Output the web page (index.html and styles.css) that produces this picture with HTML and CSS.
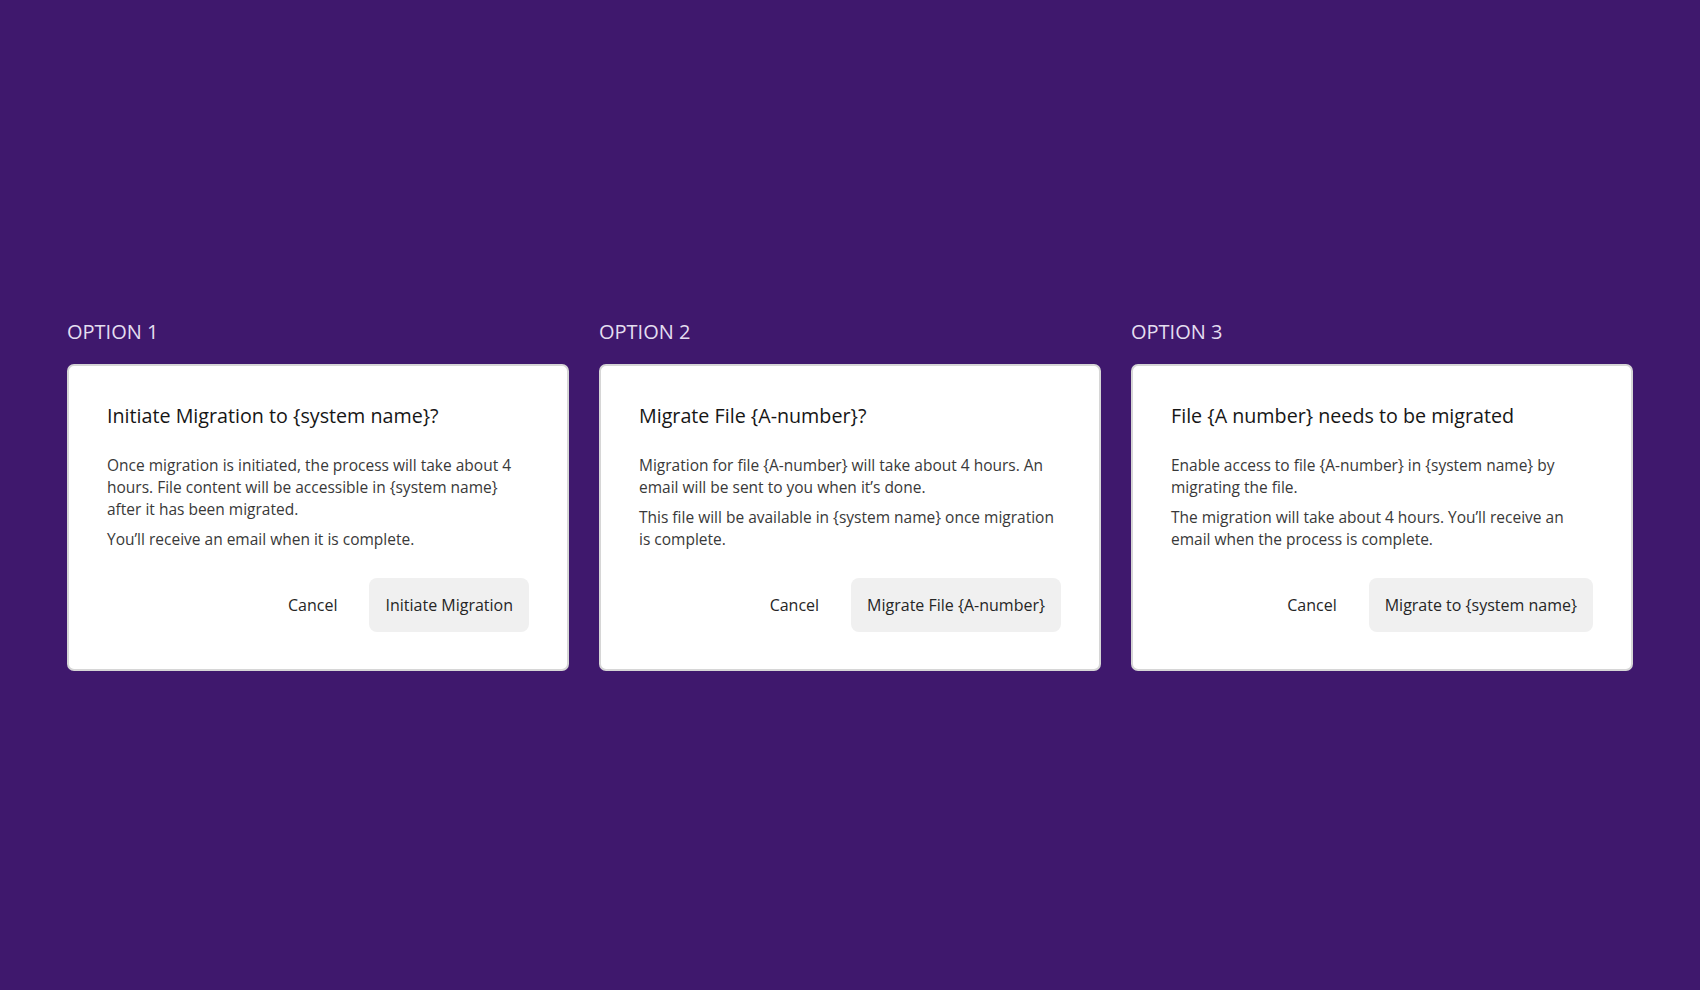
FILE: index.html
```html
<!DOCTYPE html>
<html lang="en">
<head>
<meta charset="UTF-8" />
<meta name="viewport" content="width=device-width, initial-scale=1" />
<title>Migration Dialog Options</title>
<link rel="stylesheet" href="styles.css">
</head>
<body>
  <div class="options">
    <div class="option">
      <div class="option-label">OPTION 1</div>
      <div class="dialog">
        <h2 class="dialog-title">Initiate Migration to {system name}?</h2>
        <div class="dialog-body">
          <p>Once migration is initiated, the process will take about 4 hours. File content will be accessible in {system name} after it has been migrated.</p>
          <p>You’ll receive an email when it is complete.</p>
        </div>
        <div class="dialog-actions">
          <button class="btn btn-ghost">Cancel</button>
          <button class="btn btn-secondary">Initiate Migration</button>
        </div>
      </div>
    </div>

    <div class="option">
      <div class="option-label">OPTION 2</div>
      <div class="dialog">
        <h2 class="dialog-title">Migrate File {A-number}?</h2>
        <div class="dialog-body">
          <p>Migration for file {A-number} will take about 4 hours. An email will be sent to you when it’s done.</p>
          <p>This file will be available in {system name} once migration is complete.</p>
        </div>
        <div class="dialog-actions">
          <button class="btn btn-ghost">Cancel</button>
          <button class="btn btn-secondary">Migrate File {A-number}</button>
        </div>
      </div>
    </div>

    <div class="option">
      <div class="option-label">OPTION 3</div>
      <div class="dialog">
        <h2 class="dialog-title">File {A number} needs to be migrated</h2>
        <div class="dialog-body">
          <p>Enable access to file {A-number} in {system name} by migrating the file.</p>
          <p>The migration will take about 4 hours. You’ll receive an email when the process is complete.</p>
        </div>
        <div class="dialog-actions">
          <button class="btn btn-ghost">Cancel</button>
          <button class="btn btn-secondary">Migrate to {system name}</button>
        </div>
      </div>
    </div>
  </div>
</body>
</html>
```
FILE: styles.css
```css
body {
  margin: 0;
  height: 100vh;
  background-color: #3f186d;
  font-family: 'Open Sans', 'Liberation Sans', sans-serif;
  display: flex;
  align-items: center;
  justify-content: center;
}
.options {
  display: grid;
  grid-template-columns: repeat(3, 502px);
  gap: 30px;
}
.option-label {
  font-size: 20px;
  line-height: 24px;
  color: #e4def0;
  margin-bottom: 20px;
}
.dialog {
  background-color: #fff;
  border: 2px solid #d6d6d6;
  border-radius: 7px;
  padding: 36px 38px 37px;
}
.dialog-title {
  margin: 0 0 24px;
  font-size: 19.7px;
  line-height: 28px;
  font-weight: 400;
  color: #161616;
}
.dialog-body {
  font-size: 15.5px;
  line-height: 22px;
  color: #393939;
}
.dialog-body p {
  margin: 0 0 8px;
}
.dialog-body p:last-child {
  margin-bottom: 0;
}
.dialog-actions {
  display: flex;
  justify-content: flex-end;
  gap: 16px;
  margin-top: 28px;
}
.btn {
  font-family: inherit;
  font-size: 16px;
  line-height: 22px;
  padding: 16px;
  border: none;
  border-radius: 8px;
  color: #262626;
  background: none;
  cursor: pointer;
}
.btn-secondary {
  background-color: #f0f0f0;
}
.btn-secondary:hover {
  background-color: #e5e5e5;
}
```
